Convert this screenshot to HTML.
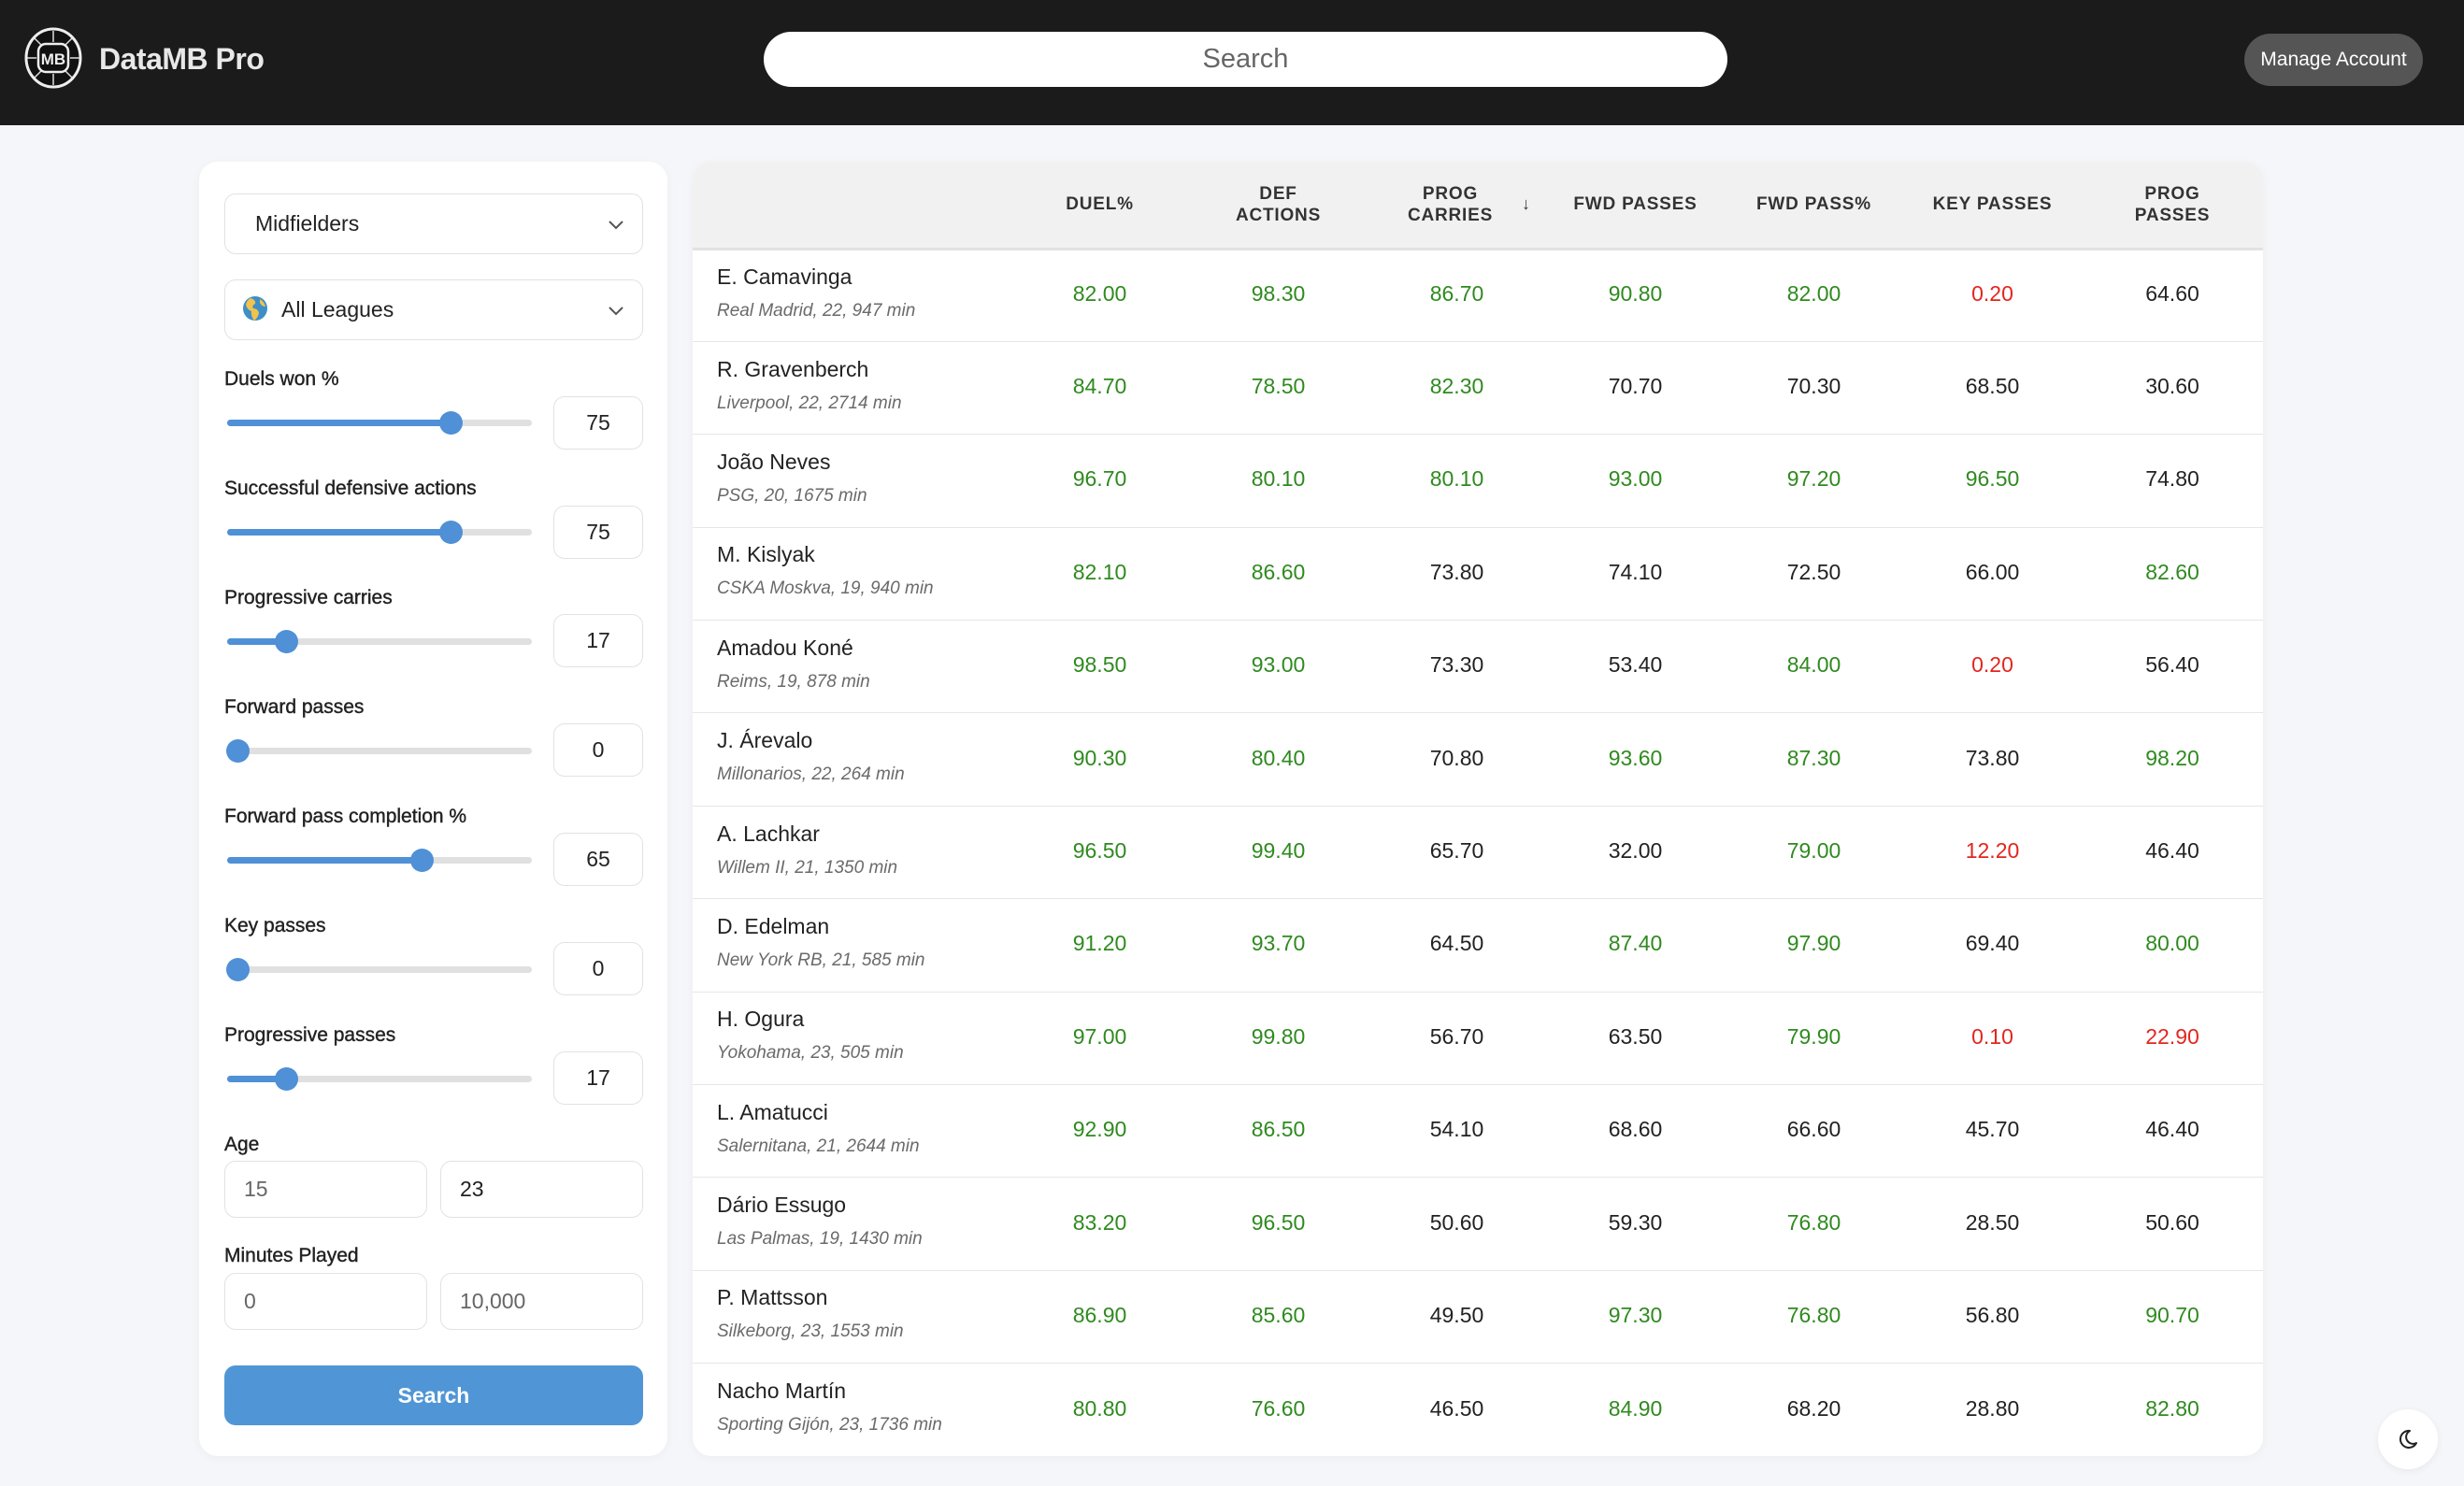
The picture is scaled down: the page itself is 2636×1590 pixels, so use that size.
<!DOCTYPE html>
<html><head><meta charset="utf-8"><style>
*{box-sizing:border-box;margin:0;padding:0}
body{width:2636px;height:1590px;background:#f5f6f9;font-family:"Liberation Sans",Arial,sans-serif;position:relative;overflow:hidden;color:#222}
.hdr{position:absolute;left:0;top:0;width:2636px;height:134px;background:#1b1b1b}
.brand{position:absolute;left:106px;top:45px;color:#e8e8e8;font-size:32px;font-weight:bold;letter-spacing:-0.5px}
.search{position:absolute;left:817px;top:34px;width:1031px;height:59px;background:#fff;border-radius:30px;text-align:center;line-height:59px;font-size:29px;color:#666}
.mng{position:absolute;left:2401px;top:36px;width:191px;height:56px;background:#555;border-radius:28px;color:#fff;font-size:21px;text-align:center;line-height:56px}
.card{position:absolute;background:#fff;border-radius:20px;box-shadow:0 2px 10px rgba(0,0,0,0.04)}
.sel{position:absolute;left:240px;width:448px;height:65px;border:1.5px solid #e2e2e2;border-radius:12px;font-size:23px;line-height:62px;padding-left:32px;color:#222}
.chev{position:absolute;right:18px;top:22px}
.lbl{position:absolute;left:240px;font-size:21px;color:#222;-webkit-text-stroke:0.4px #222}
.track{position:absolute;left:243px;width:326px;height:7px;background:#e0e0e0;border-radius:4px}
.fill{position:absolute;left:0;top:0;height:7px;background:#4f90d6;border-radius:4px}
.thumb{position:absolute;top:-9px;width:25px;height:25px;margin-left:-12px;border-radius:50%;background:#4f90d6}
.num{position:absolute;left:592px;width:96px;height:57px;border:1.5px solid #e2e2e2;border-radius:12px;text-align:center;line-height:55px;font-size:23px;color:#222}
.inp{position:absolute;height:61px;width:217px;border:1.5px solid #e2e2e2;border-radius:12px;line-height:58px;padding-left:20px;font-size:23px;color:#666}
.btn{position:absolute;left:240px;top:1461px;width:448px;height:64px;background:#5096d6;border-radius:12px;color:#fff;font-weight:bold;font-size:23px;text-align:center;line-height:64px}
table{position:absolute;left:741px;top:173px;width:1680px;border-collapse:collapse;table-layout:fixed}
th{height:93px;background:#f1f1f1;font-size:19px;font-weight:bold;color:#333;letter-spacing:0.8px;text-align:center;border-bottom:3px solid #e2e2e2;line-height:23px;position:relative}
td{height:99.4px;border-bottom:1.5px solid #e6e6e6;text-align:center;font-size:23px;color:#222;padding-bottom:3px}
tr:last-child td{border-bottom:none}
td.n{text-align:left;padding-left:26px;padding-bottom:6px}
.nm{font-size:23px;color:#222;margin-bottom:12px}
.sb{font-size:19px;font-style:italic;color:#6a6a6a}
.g{color:#2f8a1f}.r{color:#e3251e}
.arr{position:absolute;left:165px;top:34px;font-weight:normal;font-size:18px}
</style></head><body>
<div class="hdr">
<svg style="position:absolute;left:25px;top:29px" width="64" height="66" viewBox="0 0 64 66">
<ellipse cx="32" cy="33" rx="29" ry="31" fill="#111" stroke="#eee" stroke-width="3"/>
<path d="M32 4 L32 16 M32 50 L32 62 M4 33 L14 33 M50 33 L60 33 M12 12 L20 20 M52 12 L44 20 M12 54 L20 46 M52 54 L44 46" stroke="#ddd" stroke-width="1.5"/>
<rect x="16" y="18" width="32" height="30" rx="8" fill="#111" stroke="#eee" stroke-width="2.5"/>
<text x="32" y="40" font-family="Liberation Sans" font-weight="bold" font-size="17" fill="#eee" text-anchor="middle">MB</text>
</svg>
<div class="brand">DataMB Pro</div>
<div class="search">Search</div>
<div class="mng">Manage Account</div>
</div>

<div class="card" style="left:213px;top:173px;width:501px;height:1385px"></div>
<div class="sel" style="top:207px">Midfielders<svg class="chev" width="20" height="20" viewBox="0 0 20 20"><path d="M3 7 L10 14 L17 7" fill="none" stroke="#555" stroke-width="2"/></svg></div>
<div class="sel" style="top:299px;padding-left:60px">All Leagues<svg style="position:absolute;left:18px;top:16px" width="28" height="28" viewBox="0 0 28 28"><circle cx="14" cy="14" r="13" fill="#3d8fc6"/><path d="M9 3 Q15 5 14 9 Q10 11 12 14 Q17 14 18 19 Q17 24 13 27 Q9 22 10 17 Q5 15 4 10 Q5 5 9 3Z M19 4 Q24 7 25 12 Q21 12 19 8Z" fill="#f2c14e"/></svg><svg class="chev" width="20" height="20" viewBox="0 0 20 20"><path d="M3 7 L10 14 L17 7" fill="none" stroke="#555" stroke-width="2"/></svg></div>

<div class="lbl" style="top:394px">Duels won %</div>
<div class="track" style="top:449px"><div class="fill" style="width:239px"></div><div class="thumb" style="left:239px"></div></div>
<div class="num" style="top:424px">75</div>

<div class="lbl" style="top:511px">Successful defensive actions</div>
<div class="track" style="top:566px"><div class="fill" style="width:239px"></div><div class="thumb" style="left:239px"></div></div>
<div class="num" style="top:541px">75</div>

<div class="lbl" style="top:628px">Progressive carries</div>
<div class="track" style="top:683px"><div class="fill" style="width:63px"></div><div class="thumb" style="left:63px"></div></div>
<div class="num" style="top:657px">17</div>

<div class="lbl" style="top:745px">Forward passes</div>
<div class="track" style="top:800px"><div class="fill" style="width:11px"></div><div class="thumb" style="left:11px"></div></div>
<div class="num" style="top:774px">0</div>

<div class="lbl" style="top:862px">Forward pass completion %</div>
<div class="track" style="top:917px"><div class="fill" style="width:208px"></div><div class="thumb" style="left:208px"></div></div>
<div class="num" style="top:891px">65</div>

<div class="lbl" style="top:979px">Key passes</div>
<div class="track" style="top:1034px"><div class="fill" style="width:11px"></div><div class="thumb" style="left:11px"></div></div>
<div class="num" style="top:1008px">0</div>

<div class="lbl" style="top:1096px">Progressive passes</div>
<div class="track" style="top:1151px"><div class="fill" style="width:63px"></div><div class="thumb" style="left:63px"></div></div>
<div class="num" style="top:1125px">17</div>

<div class="lbl" style="top:1213px">Age</div>
<div class="inp" style="left:240px;top:1242px">15</div>
<div class="inp" style="left:471px;top:1242px;color:#222">23</div>
<div class="lbl" style="top:1332px">Minutes Played</div>
<div class="inp" style="left:240px;top:1362px">0</div>
<div class="inp" style="left:471px;top:1362px">10,000</div>
<div class="btn">Search</div>

<div class="card" style="left:741px;top:173px;width:1680px;height:1385px;overflow:hidden"></div>
<table>
<colgroup><col style="width:340px"><col style="width:191px"><col style="width:191px"><col style="width:191px"><col style="width:191px"><col style="width:191px"><col style="width:191px"><col style="width:194px"></colgroup>
<tr><th style="border-top-left-radius:20px"></th><th>DUEL%</th><th>DEF<br>ACTIONS</th><th style="padding-right:14px">PROG<br>CARRIES<span class="arr">↓</span></th><th>FWD PASSES</th><th>FWD PASS%</th><th>KEY PASSES</th><th style="border-top-right-radius:20px">PROG<br>PASSES</th></tr>
<tr><td class="n"><div class="nm">E. Camavinga</div><div class="sb">Real Madrid, 22, 947 min</div></td><td class="g">82.00</td><td class="g">98.30</td><td class="g">86.70</td><td class="g">90.80</td><td class="g">82.00</td><td class="r">0.20</td><td>64.60</td></tr>
<tr><td class="n"><div class="nm">R. Gravenberch</div><div class="sb">Liverpool, 22, 2714 min</div></td><td class="g">84.70</td><td class="g">78.50</td><td class="g">82.30</td><td>70.70</td><td>70.30</td><td>68.50</td><td>30.60</td></tr>
<tr><td class="n"><div class="nm">João Neves</div><div class="sb">PSG, 20, 1675 min</div></td><td class="g">96.70</td><td class="g">80.10</td><td class="g">80.10</td><td class="g">93.00</td><td class="g">97.20</td><td class="g">96.50</td><td>74.80</td></tr>
<tr><td class="n"><div class="nm">M. Kislyak</div><div class="sb">CSKA Moskva, 19, 940 min</div></td><td class="g">82.10</td><td class="g">86.60</td><td>73.80</td><td>74.10</td><td>72.50</td><td>66.00</td><td class="g">82.60</td></tr>
<tr><td class="n"><div class="nm">Amadou Koné</div><div class="sb">Reims, 19, 878 min</div></td><td class="g">98.50</td><td class="g">93.00</td><td>73.30</td><td>53.40</td><td class="g">84.00</td><td class="r">0.20</td><td>56.40</td></tr>
<tr><td class="n"><div class="nm">J. Árevalo</div><div class="sb">Millonarios, 22, 264 min</div></td><td class="g">90.30</td><td class="g">80.40</td><td>70.80</td><td class="g">93.60</td><td class="g">87.30</td><td>73.80</td><td class="g">98.20</td></tr>
<tr><td class="n"><div class="nm">A. Lachkar</div><div class="sb">Willem II, 21, 1350 min</div></td><td class="g">96.50</td><td class="g">99.40</td><td>65.70</td><td>32.00</td><td class="g">79.00</td><td class="r">12.20</td><td>46.40</td></tr>
<tr><td class="n"><div class="nm">D. Edelman</div><div class="sb">New York RB, 21, 585 min</div></td><td class="g">91.20</td><td class="g">93.70</td><td>64.50</td><td class="g">87.40</td><td class="g">97.90</td><td>69.40</td><td class="g">80.00</td></tr>
<tr><td class="n"><div class="nm">H. Ogura</div><div class="sb">Yokohama, 23, 505 min</div></td><td class="g">97.00</td><td class="g">99.80</td><td>56.70</td><td>63.50</td><td class="g">79.90</td><td class="r">0.10</td><td class="r">22.90</td></tr>
<tr><td class="n"><div class="nm">L. Amatucci</div><div class="sb">Salernitana, 21, 2644 min</div></td><td class="g">92.90</td><td class="g">86.50</td><td>54.10</td><td>68.60</td><td>66.60</td><td>45.70</td><td>46.40</td></tr>
<tr><td class="n"><div class="nm">Dário Essugo</div><div class="sb">Las Palmas, 19, 1430 min</div></td><td class="g">83.20</td><td class="g">96.50</td><td>50.60</td><td>59.30</td><td class="g">76.80</td><td>28.50</td><td>50.60</td></tr>
<tr><td class="n"><div class="nm">P. Mattsson</div><div class="sb">Silkeborg, 23, 1553 min</div></td><td class="g">86.90</td><td class="g">85.60</td><td>49.50</td><td class="g">97.30</td><td class="g">76.80</td><td>56.80</td><td class="g">90.70</td></tr>
<tr><td class="n"><div class="nm">Nacho Martín</div><div class="sb">Sporting Gijón, 23, 1736 min</div></td><td class="g">80.80</td><td class="g">76.60</td><td>46.50</td><td class="g">84.90</td><td>68.20</td><td>28.80</td><td class="g">82.80</td></tr>
</table>

<div style="position:absolute;left:2544px;top:1508px;width:64px;height:64px;border-radius:50%;background:#fff;box-shadow:0 2px 8px rgba(0,0,0,0.06)">
<svg style="position:absolute;left:20px;top:20px" width="24" height="24" viewBox="0 0 24 24"><path d="M14 3 A9 9 0 1 0 21 16 A7 7 0 0 1 14 3 Z" fill="none" stroke="#222" stroke-width="2" stroke-linejoin="round"/></svg>
</div>
</body></html>
